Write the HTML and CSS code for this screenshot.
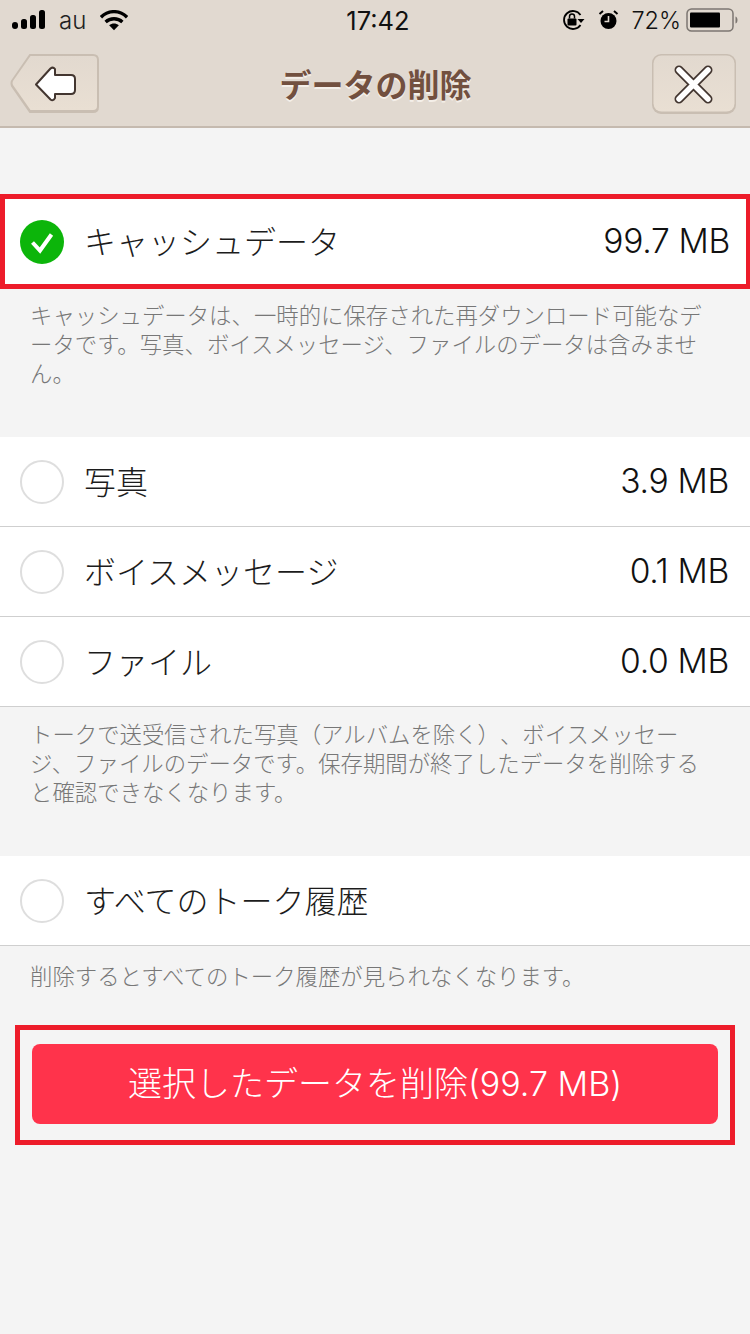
FILE: index.html
```html
<!DOCTYPE html>
<html lang="ja">

<head>
  <meta charset="utf-8">
  <link rel="stylesheet" href="styles.css">
</head>

<body>
  <div class="top-bar">
    <div class="status-bar">
      <div class="status-left">
        <svg width="34" height="20" viewBox="0 0 34 20">
          <rect x="0" y="12" width="6" height="7" rx="3" fill="#000" />
          <rect x="9" y="9" width="6" height="10" rx="2.5" fill="#000" />
          <rect x="18" y="5" width="6" height="14" rx="2.5" fill="#000" />
          <rect x="27" y="0" width="6" height="19" rx="2.5" fill="#000" />
        </svg>
        <span class="carrier">au</span>
        <svg width="28" height="21" viewBox="0 0 30 22">
          <path d="M1 7.5 C9 -0.5 21 -0.5 29 7.5" fill="none" stroke="#000" stroke-width="3.6" />
          <path d="M6 12.5 C11 8 19 8 24 12.5" fill="none" stroke="#000" stroke-width="3.6" />
          <path d="M9.8 16 C13 13.5 17 13.5 20.2 16 L15 21.5 Z" fill="#000" />
        </svg>
      </div>
      <div class="time">17:42</div>
      <div class="status-right">
        <svg width="24" height="22" viewBox="0 0 24 22">
          <path d="M19.5 6 A9 9 0 1 0 19.5 16" fill="none" stroke="#000" stroke-width="1.8" />
          <path d="M16.5 10 L23.5 10 L20 14 Z" fill="#000" />
          <rect x="6.5" y="9.5" width="9" height="7" rx="1" fill="#000" />
          <path d="M8.5 9.5 V7.5 A2.5 2.5 0 0 1 13.5 7.5 V9.5" fill="none" stroke="#000" stroke-width="1.5" />
        </svg>
        <svg class="alarm" width="21" height="20" viewBox="0 0 20 20">
          <circle cx="10" cy="11" r="8" fill="#000" />
          <path d="M10 6 V11.5 H6" fill="none" stroke="#e1d9d0" stroke-width="1.6" />
          <path d="M1 4 L4.5 1 M19 4 L15.5 1" stroke="#000" stroke-width="2" />
        </svg>
        <span class="battery-text">72%</span>
        <svg width="52" height="24" viewBox="0 0 52 24">
          <rect x="1" y="1" width="46" height="22" rx="4.5" fill="none" stroke="#7c7671" stroke-width="1.5" />
          <rect x="4" y="4.5" width="30" height="15" rx="1" fill="#000" />
          <path d="M49.5 8.5 C51 9 51.5 10.5 51.5 12 C51.5 13.5 51 15 49.5 15.5 Z" fill="#7c7671" />
        </svg>
      </div>
    </div>

    <div class="nav-bar">
      <svg class="btn-back" width="90" height="62" viewBox="0 0 90 62">
        <defs>
          <linearGradient id="btnFill" x1="0" y1="0" x2="0" y2="1">
            <stop offset="0" stop-color="#e2d9cf" />
            <stop offset="1" stop-color="#e9dfd3" />
          </linearGradient>
        </defs>
        <path d="M20 2 H83 Q88 2 88 7 V54 Q88 59 83 59 H20 L2 33 Q1 30 2 28 Z" fill="#c9beb2" stroke="#c9beb2" stroke-width="2" />
        <path d="M20.5 3 H83 Q87 3 87 7 V53 Q87 57 83 57 H20.5 L3 32 Q2 30 3 28 Z" fill="url(#btnFill)" />
        <path d="M26 31.5 L40.5 15.5 Q43 13.5 45 16 V22 H61 Q65 22 65 26 V37 Q65 41 61 41 H45 V45 Q43 48.5 40.5 46.5 Z" fill="#fff" stroke="#433630" stroke-width="2" stroke-linejoin="round" />
      </svg>
      <h1>データの削除</h1>
      <svg class="btn-close" width="86" height="62" viewBox="0 0 86 62">
        <rect x="1" y="1" width="84" height="60" rx="9" fill="#c9beb2" />
        <rect x="2.5" y="2.5" width="81" height="56" rx="8" fill="url(#btnFill)" />
        <path d="M28 17 L57 46 M57 17 L28 46" stroke="#433630" stroke-width="9" stroke-linecap="round" />
        <path d="M28 17 L57 46 M57 17 L28 46" stroke="#fff" stroke-width="5.5" stroke-linecap="round" />
      </svg>
    </div>
  </div>

  <div class="content">
    <div class="highlight-row">
      <div class="row">
        <span class="check checked">
          <svg width="44" height="44" viewBox="0 0 44 44">
            <path d="M12.5 22.5 L20 30.5 L31.5 14.5" fill="none" stroke="#fff" stroke-width="4" />
          </svg>
        </span>
        <span class="name">キャッシュデータ</span>
        <span class="size">99.7 MB</span>
      </div>
    </div>
    <p class="note note-first">キャッシュデータは、一時的に保存された再ダウンロード可能なデ<br>ータです。写真、ボイスメッセージ、ファイルのデータは含みませ<br>ん。</p>

    <div class="group">
      <div class="row"><span class="check"></span><span class="name">写真</span><span class="size">3.9 MB</span></div>
      <div class="row"><span class="check"></span><span class="name">ボイスメッセージ</span><span class="size">0.1 MB</span></div>
      <div class="row"><span class="check"></span><span class="name">ファイル</span><span class="size">0.0 MB</span></div>
    </div>
    <p class="note">トークで送受信された写真（アルバムを除く）、ボイスメッセー<br>ジ、ファイルのデータです。保存期間が終了したデータを削除する<br>と確認できなくなります。</p>

    <div class="group">
      <div class="row"><span class="check"></span><span class="name">すべてのトーク履歴</span></div>
    </div>
    <p class="note note-last">削除するとすべてのトーク履歴が見られなくなります。</p>

    <div class="highlight-button">
      <button class="delete-btn">選択したデータを削除(99.7 MB)</button>
    </div>
  </div>
</body>

</html>
```

FILE: styles.css
```css
* {
  box-sizing: border-box;
}

html,
body {
  height: 100%;
}

body {
  margin: 0;
  background-color: #f4f4f4;
  font-family: 'Inter', 'Noto Sans CJK JP', sans-serif;
  color: #111;
}

.top-bar {
  background-color: #e1d9d0;
  height: 128px;
  border-bottom: 2px solid #c5baaf;
}

.status-bar {
  height: 40px;
  display: grid;
  grid-template-columns: 1fr auto 1fr;
  align-items: center;
  padding: 0 0 0 12px;
  font-size: 25px;
}

.status-left,
.status-right {
  display: flex;
  align-items: center;
}

.status-left svg {
  display: block;
}

.carrier {
  margin: 0 14px 0 13px;
  font-size: 24px;
  font-weight: 300;
  color: #222;
}

.time {
  padding-right: 6px;
  font-size: 25.5px;
  font-weight: 400;
}

.status-right {
  justify-content: flex-end;
  padding-right: 12px;
}

.alarm {
  margin-left: 13px;
}

.battery-text {
  margin: 0 5px 0 12px;
  font-size: 23.5px;
  font-weight: 300;
}

.nav-bar {
  height: 86px;
  display: flex;
  align-items: flex-start;
  padding: 13px 13px 0 10px;
}

h1 {
  flex: 1;
  margin: 0;
  padding-top: 9px;
  text-align: center;
  font-family: 'Noto Sans CJK JP', sans-serif;
  font-size: 32px;
  line-height: 42px;
  font-weight: 700;
  color: #72503f;
  text-shadow: 0 2px 0 #f4efe9;
}

.content {
  padding-top: 66px;
}

.highlight-row {
  border: 5px solid #ed1c2a;
  border-right-width: 4px;
  background-color: #fff;
}

.highlight-row .row {
  height: 85px;
  border-bottom: 0;
  padding-left: 15px;
  padding-right: 16px;
}

.group {
  background-color: #fff;
}

.row {
  height: 90px;
  display: flex;
  align-items: center;
  padding: 0 21px 0 20px;
  border-bottom: 1px solid #cfcfcf;
  background-color: #fff;
}

.check {
  width: 44px;
  height: 44px;
  border: 2px solid #dedede;
  border-radius: 50%;
  flex-shrink: 0;
  margin-right: 20px;
}

.checked {
  border: 0;
  background-color: #0cb50a;
}

.checked svg {
  display: block;
}

.name {
  flex: 1;
  padding-bottom: 4px;
  font-family: 'Noto Sans CJK JP', sans-serif;
  font-size: 32px;
  font-weight: 300;
  color: #1c1c1c;
}

.size {
  padding-bottom: 2px;
  font-size: 33.6px;
  font-weight: 300;
  letter-spacing: -0.3px;
  color: #111;
}

.note {
  margin: 0;
  padding: 12px 20px 0 30px;
  height: 149px;
  font-family: 'Noto Sans CJK JP', sans-serif;
  font-size: 22.4px;
  line-height: 29px;
  font-weight: 300;
  color: #777;
  text-spacing-trim: space-all;
}

.note-first {
  padding-top: 11px;
  height: 148px;
}

.note-last {
  height: 79px;
  padding-top: 15px;
}

.highlight-button {
  margin: 0 15px;
  padding: 14px 12px 16px;
  border: 5px solid #ed1c2a;
}

.delete-btn {
  display: block;
  width: 100%;
  height: 80px;
  padding: 0 0 5px;
  border: 0;
  border-radius: 8px;
  background-color: #ff334b;
  color: #fff;
  font-family: 'Inter', 'Noto Sans CJK JP', sans-serif;
  font-size: 34px;
  font-weight: 300;
}
```
